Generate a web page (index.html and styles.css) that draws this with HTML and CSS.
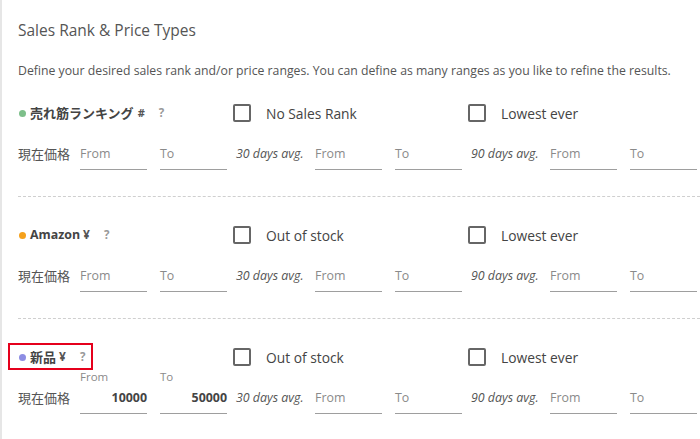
FILE: index.html
```html
<!DOCTYPE html>
<html lang="ja">
<head>
<meta charset="utf-8">
<title>Sales Rank &amp; Price Types</title>
<link rel="stylesheet" href="styles.css">
</head>
<body>
<div class="panel">
  <h2 class="title">Sales Rank &amp; Price Types</h2>
  <p class="desc">Define your desired sales rank and/or price ranges. You can define as many ranges as you like to refine the results.</p>

  <section class="group">
    <div class="head">
      <div class="head-label">
        <span class="name"><span class="dot dot-green"></span>売れ筋ランキング<span class="suffix small">#</span><span class="help">?</span></span>
      </div>
      <label class="check"><span class="box"></span>No Sales Rank</label>
      <label class="check"><span class="box"></span>Lowest ever</label>
    </div>
    <div class="prices">
      <span class="row-label">現在価格</span>
      <div class="field"><span class="ph">From</span></div>
      <div class="field"><span class="ph">To</span></div>
      <span class="avg">30 days avg.</span>
      <div class="field"><span class="ph">From</span></div>
      <div class="field"><span class="ph">To</span></div>
      <span class="avg">90 days avg.</span>
      <div class="field"><span class="ph">From</span></div>
      <div class="field"><span class="ph">To</span></div>
    </div>
  </section>

  <hr class="divider">

  <section class="group">
    <div class="head">
      <div class="head-label">
        <span class="name latin"><span class="dot dot-orange"></span>Amazon<span class="suffix">¥</span><span class="help">?</span></span>
      </div>
      <label class="check"><span class="box"></span>Out of stock</label>
      <label class="check"><span class="box"></span>Lowest ever</label>
    </div>
    <div class="prices">
      <span class="row-label">現在価格</span>
      <div class="field"><span class="ph">From</span></div>
      <div class="field"><span class="ph">To</span></div>
      <span class="avg">30 days avg.</span>
      <div class="field"><span class="ph">From</span></div>
      <div class="field"><span class="ph">To</span></div>
      <span class="avg">90 days avg.</span>
      <div class="field"><span class="ph">From</span></div>
      <div class="field"><span class="ph">To</span></div>
    </div>
  </section>

  <hr class="divider">

  <section class="group">
    <div class="head">
      <div class="head-label">
        <span class="name highlight"><span class="dot dot-purple"></span>新品<span class="suffix">¥</span><span class="help">?</span></span>
      </div>
      <label class="check"><span class="box"></span>Out of stock</label>
      <label class="check"><span class="box"></span>Lowest ever</label>
    </div>
    <div class="prices">
      <span class="row-label">現在価格</span>
      <div class="field filled"><span class="float">From</span><span class="val">10000</span></div>
      <div class="field filled"><span class="float">To</span><span class="val">50000</span></div>
      <span class="avg">30 days avg.</span>
      <div class="field"><span class="ph">From</span></div>
      <div class="field"><span class="ph">To</span></div>
      <span class="avg">90 days avg.</span>
      <div class="field"><span class="ph">From</span></div>
      <div class="field"><span class="ph">To</span></div>
    </div>
  </section>
</div>
</body>
</html>
```

FILE: styles.css
```css
html, body {
  margin: 0;
  padding: 0;
  background: #fff;
  overflow: hidden;
}
body {
  font-family: "Open Sans", "Noto Sans CJK JP", sans-serif;
  color: #555;
}
.panel {
  border-left: 2px solid #e6e6e6;
  min-height: 439px;
  padding: 20px 0 0 16px;
  width: 720px;
  box-sizing: border-box;
}
.title {
  margin: 0;
  font-size: 15.5px;
  font-weight: 400;
  line-height: 20px;
  color: #555;
}
.desc {
  margin: 22px 0 0;
  font-size: 12.25px;
  line-height: 18px;
  white-space: nowrap;
  color: #555;
}
.group {
  margin: 0;
}
.desc + .group {
  margin-top: 21px;
}
.head {
  display: flex;
  align-items: center;
  height: 24px;
}
.head-label {
  width: 209px;
  display: flex;
  align-items: center;
}
.name {
  position: relative;
  display: inline-flex;
  align-items: center;
  font-family: "Noto Sans CJK JP", "Open Sans", sans-serif;
  font-weight: 700;
  font-size: 13px;
  line-height: 16px;
  color: #444;
}
.name.latin {
  font-family: "Open Sans", "Noto Sans CJK JP", sans-serif;
  font-size: 12.4px;
}
.dot {
  width: 7px;
  height: 7px;
  border-radius: 50%;
  margin: 0 4px 0 1px;
  flex: none;
}
.dot-green { background: #7dbf8a; }
.dot-orange { background: #f5a11c; }
.dot-purple { background: #8d8de3; }
.suffix {
  font-family: "Open Sans", sans-serif;
  font-size: 12px;
  font-weight: 700;
  margin-left: 3px;
  color: #555;
}
.suffix.small {
  font-size: 11px;
  margin-left: 4px;
}
.help {
  font-family: "Open Sans", sans-serif;
  font-size: 11.5px;
  font-weight: 700;
  color: #999;
  margin-left: 14px;
}
.highlight::after {
  content: "";
  position: absolute;
  left: -10px;
  right: -8px;
  top: -6px;
  bottom: -5px;
  border: 2px solid #e5001c;
}
.check {
  width: 235px;
  display: flex;
  align-items: center;
  padding-left: 6px;
  box-sizing: border-box;
  font-size: 13.8px;
  color: #444;
}
.box {
  width: 14px;
  height: 14px;
  border: 2px solid #666;
  border-radius: 2px;
  margin-right: 15px;
  flex: none;
}
.prices {
  display: flex;
  align-items: flex-end;
  margin-top: 1px;
}
.row-label {
  width: 62px;
  font-size: 13px;
  line-height: 18px;
  padding-bottom: 7px;
  color: #555;
}
.field {
  width: 67px;
  height: 43px;
  border-bottom: 1px solid #9e9e9e;
  display: flex;
  flex-direction: column;
  justify-content: flex-end;
  box-sizing: content-box;
}
.field + .field {
  margin-left: 13px;
}
.ph {
  font-size: 12.4px;
  line-height: 18px;
  padding-bottom: 6px;
  color: #8a8a8a;
}
.field.filled {
  justify-content: space-between;
}
.float {
  font-size: 11.5px;
  line-height: 14px;
  color: #8a8a8a;
}
.val {
  font-size: 12.4px;
  font-weight: 700;
  line-height: 18px;
  padding-bottom: 6px;
  text-align: right;
  color: #444;
}
.avg {
  width: 88px;
  box-sizing: border-box;
  padding: 0 0 7px 9px;
  font-size: 12.4px;
  font-style: italic;
  line-height: 18px;
  color: #555;
  white-space: nowrap;
}
.divider {
  border: 0;
  border-top: 1px dashed #cfcfcf;
  margin: 26px 0 26px;
  height: 0;
}
```
